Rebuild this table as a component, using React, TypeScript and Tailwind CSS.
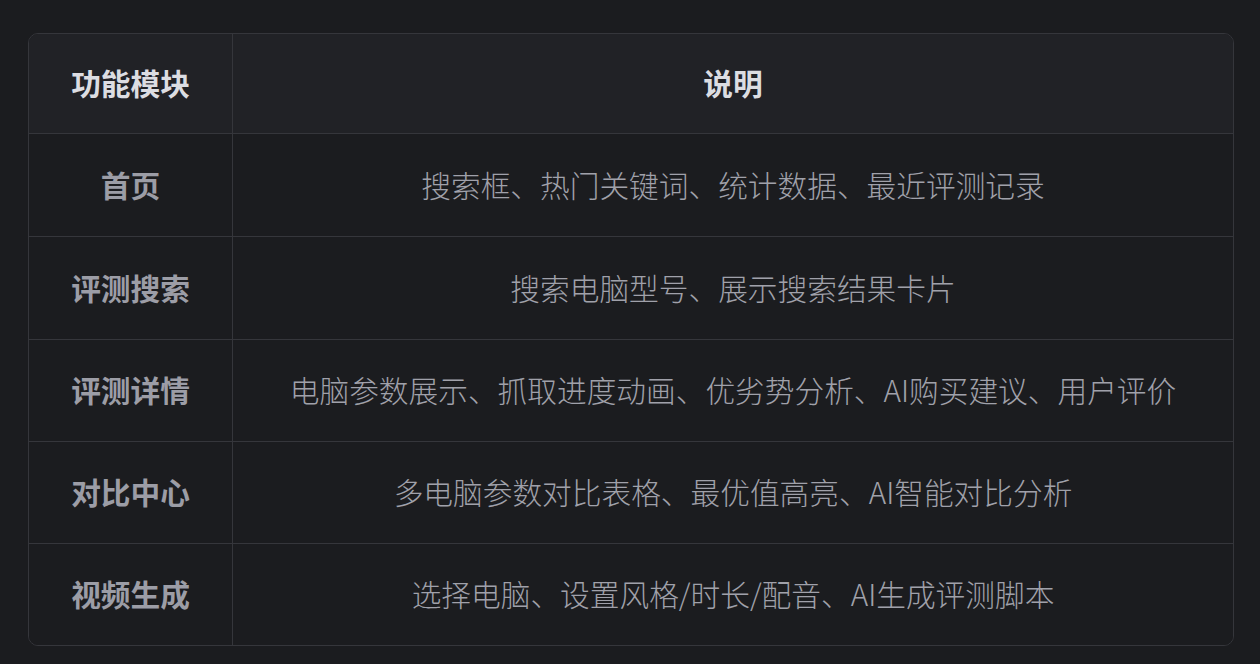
import React from "react";

const rows: [string, string][] = [
  ["首页", "搜索框、热门关键词、统计数据、最近评测记录"],
  ["评测搜索", "搜索电脑型号、展示搜索结果卡片"],
  ["评测详情", "电脑参数展示、抓取进度动画、优劣势分析、AI购买建议、用户评价"],
  ["对比中心", "多电脑参数对比表格、最优值高亮、AI智能对比分析"],
  ["视频生成", "选择电脑、设置风格/时长/配音、AI生成评测脚本"],
];

const heights = ["h-[103px]", "h-[103px]", "h-[102px]", "h-[102px]", "h-[102px]"];

export default function App() {
  return (
    <div
      className="w-[1260px] h-[664px] bg-[#1b1c1f] pt-[33px] pl-[28px]"
      style={{ fontFamily: '"Noto Sans CJK SC", "Noto Sans", sans-serif' }}
    >
      <div className="w-[1206px] border border-[#35363b] rounded-[10px] overflow-hidden">
        <div className="flex h-[99px] bg-[#212226]">
          <div className="w-[204px] flex items-center justify-center border-r border-[#35363b] text-[29.7px] font-bold text-[#dcdde2]">
            功能模块
          </div>
          <div className="flex-1 flex items-center justify-center text-[29.7px] font-bold text-[#dcdde2]">
            说明
          </div>
        </div>
        {rows.map(([a, b], i) => (
          <div key={a} className={`flex border-t border-[#35363b] bg-[#1b1c1f] ${heights[i]}`}>
            <div className="w-[204px] flex items-center justify-center border-r border-[#35363b] text-[29.7px] font-bold text-[#9c9da6]">
              {a}
            </div>
            <div className="flex-1 flex items-center justify-center text-[29.7px] font-light text-[#a0a1aa]">
              {b}
            </div>
          </div>
        ))}
      </div>
    </div>
  );
}
